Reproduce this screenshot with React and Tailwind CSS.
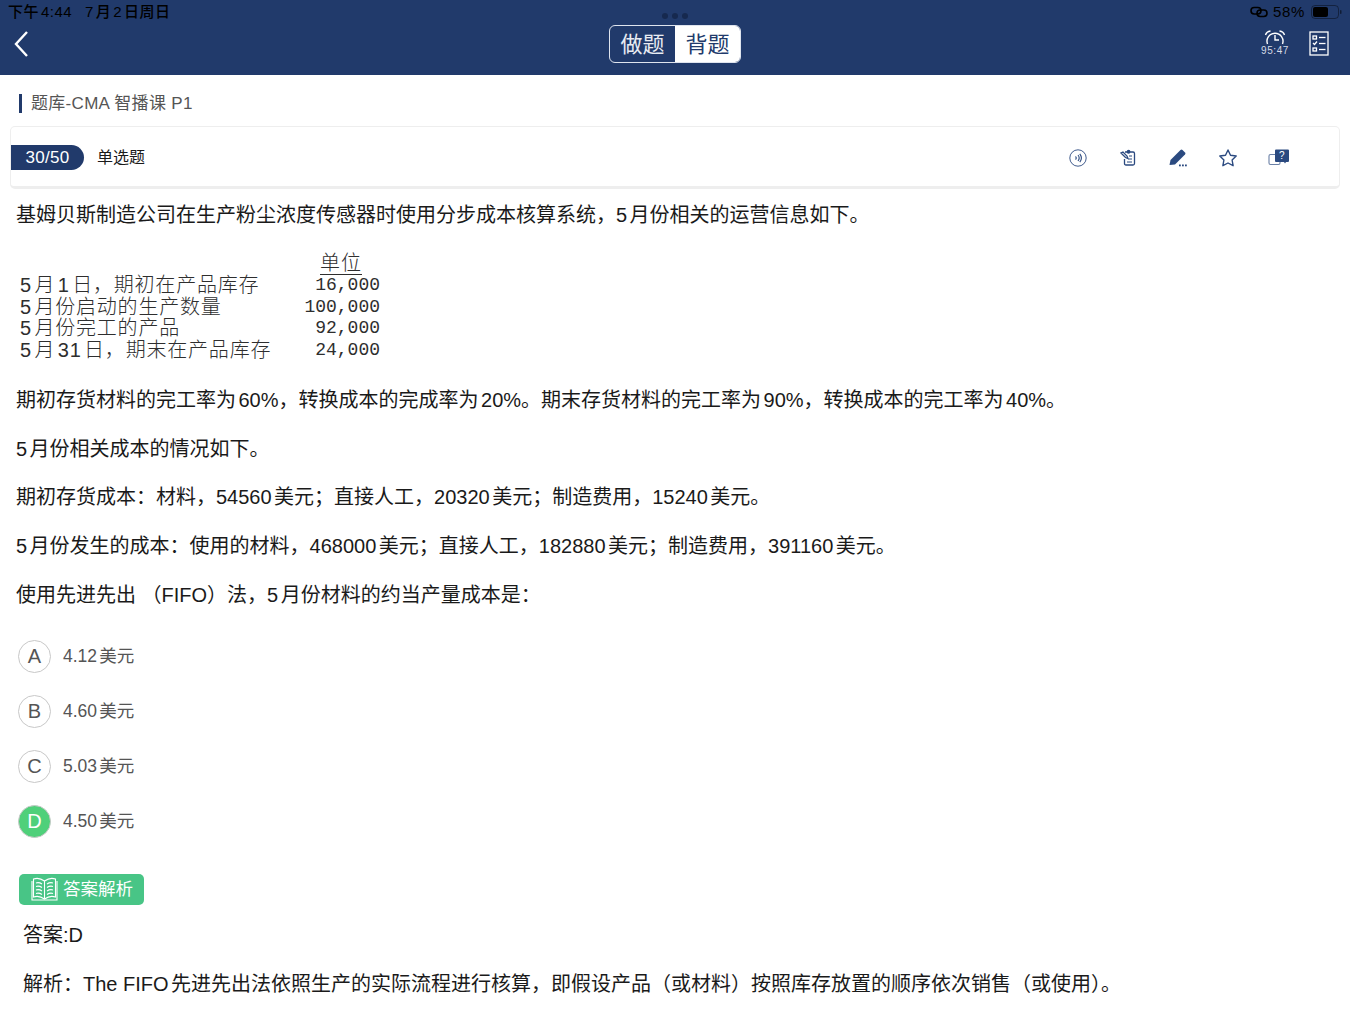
const font = { fontFamily: '"Liberation Sans", "Noto Sans CJK SC", sans-serif' };

const paragraphs = [
  '期初存货材料的完工率为60%，转换成本的完成率为20%。期末存货材料的完工率为90%，转换成本的完工率为40%。',
  '5月份相关成本的情况如下。',
  '期初存货成本：材料，54560美元；直接人工，20320美元；制造费用，15240美元。',
  '5月份发生的成本：使用的材料，468000美元；直接人工，182880美元；制造费用，391160美元。',
  '使用先进先出 （FIFO）法，5月份材料的约当产量成本是：',
];

const options = [
  { key: 'A', text: '4.12美元' },
  { key: 'B', text: '4.60美元' },
  { key: 'C', text: '5.03美元' },
  { key: 'D', text: '4.50美元', correct: true },
];

const tableRows = [
  ['5月1日，期初在产品库存', '16,000'],
  ['5月份启动的生产数量', '100,000'],
  ['5月份完工的产品', '92,000'],
  ['5月31日，期末在产品库存', '24,000'],
];

function StatusBar() {
  return (
    <div className="flex h-[24px] items-center justify-between pl-[8px] pr-[7px] text-[15px] font-medium text-black">
      <div className="flex gap-[13px] tracking-[0.5px]">
        <span>下午4:44</span>
        <span>7月2日周日</span>
      </div>
      <div className="flex items-center gap-[5px]">
        <svg width="18" height="12" viewBox="0 0 18 12" fill="none" stroke="#000" strokeWidth="1.6">
          <rect x="1" y="1.5" width="10" height="6.5" rx="3.2" />
          <rect x="7" y="4" width="10" height="6.5" rx="3.2" />
        </svg>
        <span className="tracking-[0.7px]">58%</span>
        <svg width="32" height="14" viewBox="0 0 32 14" className="ml-[1px]">
          <rect x="0.5" y="0.5" width="27" height="13" rx="3.5" fill="none" stroke="#000" strokeOpacity="0.4" />
          <rect x="2" y="2" width="15" height="10" rx="2" fill="#000" />
          <rect x="29" y="5" width="1.5" height="4" rx="0.7" fill="#000" fillOpacity="0.5" />
        </svg>
      </div>
    </div>
  );
}

function NavBar() {
  return (
    <div className="flex h-[51px] items-start justify-between">
      <div className="w-[200px] pl-[14px] pt-[7px]">
        <svg width="14" height="26" viewBox="0 0 14 26" fill="none" stroke="white" strokeWidth="2.4">
          <path d="M13 1 L2 13 L13 25" />
        </svg>
      </div>
      <div className="mt-[1px] flex h-[38px] w-[132px] overflow-hidden rounded-[6px] border border-[#dfe4ee] text-[22px]">
        <div className="flex flex-1 items-center justify-center text-[#e8ebf2]">做题</div>
        <div className="flex flex-1 items-center justify-center bg-white text-[#213a6b]">背题</div>
      </div>
      <div className="flex w-[200px] justify-end gap-[20px] pr-[21px] pt-[6px]">
        <div className="flex w-[28px] flex-col items-center">
          <svg width="22" height="15" viewBox="0 0 22 15" fill="none" stroke="white" strokeWidth="1.4">
            <path d="M3.5 14 A8 8 0 1 1 18.5 14" />
            <path d="M11 5 V10 H15" />
            <path d="M1.5 5 Q2.5 1.5 6.5 1" />
            <path d="M20.5 5 Q19.5 1.5 15.5 1" />
          </svg>
          <span className="whitespace-nowrap text-[10px] leading-[12px] tracking-[0.6px] text-[#d5dbe6]">95:47</span>
        </div>
        <svg width="20" height="25" viewBox="0 0 20 25" fill="none" stroke="white" strokeWidth="1.3" className="mt-[1px]">
          <rect x="1" y="1" width="18" height="23" />
          <rect x="4" y="5" width="3.5" height="3" />
          <path d="M10 6.5 H16.5" />
          <path d="M4 12 L5.5 13.5 L8 10.5" />
          <path d="M10 12.5 H16.5" />
          <rect x="4" y="17" width="3.5" height="3" />
          <path d="M10 18.5 H16.5" />
        </svg>
      </div>
    </div>
  );
}

function ToolIcons() {
  return (
    <div className="flex items-center gap-[30px] pr-[51px]">
      <svg width="20" height="20" viewBox="0 0 20 20" fill="none" stroke="#2b4a80">
        <circle cx="10" cy="10" r="8.2" strokeWidth="0.9" />
        <path d="M7.5 8.5 Q9 10 7.5 11.5" strokeWidth="1.1" />
        <path d="M10 7 Q12.4 10 10 13" strokeWidth="1.1" />
        <path d="M11.8 5.8 Q15 10 11.8 14.2" strokeWidth="1.1" />
      </svg>
      <svg width="20" height="20" viewBox="0 0 20 20" fill="none" stroke="#2b4a80" strokeWidth="1.3">
        <path d="M7 4 H15 Q16.5 4 16.5 5.5 V15.5 Q16.5 17 15 17 H8 Q6.5 17 6.5 15.5 V11" />
        <path d="M3 5 L7.5 9.5 L10 10.5 L9 8 L5 4 Z" />
        <path d="M11 8 H14 M10.5 11 H14 M9 14 H14" strokeWidth="1" />
        <circle cx="10.5" cy="3.8" r="1.3" fill="#2b4a80" />
      </svg>
      <svg width="20" height="20" viewBox="0 0 20 20" fill="#2b4a80">
        <path d="M1.5 17 L2.5 12 L12.5 2 Q13.5 1 14.5 2 L17 4.5 Q18 5.5 17 6.5 L7 16.5 Z" />
        <rect x="11" y="16.5" width="1.8" height="1.8" />
        <rect x="14" y="16.5" width="1.8" height="1.8" />
        <rect x="17" y="16.5" width="1.8" height="1.8" />
      </svg>
      <svg width="20" height="20" viewBox="0 0 20 20" fill="none" stroke="#2b4a80" strokeWidth="1.4" strokeLinejoin="round">
        <path d="M10 2 L12.5 7.2 L18.2 8 L14.1 12 L15.1 17.7 L10 15 L4.9 17.7 L5.9 12 L1.8 8 L7.5 7.2 Z" />
      </svg>
      <div className="relative h-[20px] w-[20px]">
        <svg width="22" height="20" viewBox="0 0 22 20" fill="none">
          <rect x="1" y="6.5" width="11" height="10" rx="1.5" stroke="#2b4a80" strokeOpacity="0.7" strokeWidth="1.1" />
          <path d="M7 2.5 Q7 1.5 8 1.5 H20 Q21 1.5 21 2.5 V13 Q21 14 20 14 H18 L17 15.5 L16 14 H8 Q7 14 7 13 Z" fill="#2b4a80" />
        </svg>
        <span className="absolute left-[11px] top-[1px] text-[10px] leading-[13px] text-white">?</span>
      </div>
    </div>
  );
}

function QuestionTable() {
  return (
    <div className="mt-[23px] h-[114px] w-[380px] pl-[20px] text-[20px] font-light leading-[21.6px] text-[#2e2e2e]">
      <div className="flex justify-end pr-[18px]">
        <span className="border-b border-[#2e2e2e] leading-[21px] tracking-[1px]">单位</span>
      </div>
      {tableRows.map(([label, value]) => (
        <div key={label} className="flex justify-between">
          <span className="tracking-[0.8px]">{label}</span>
          <span className="text-[18px]" style={{ fontFamily: '"Liberation Mono", monospace' }}>{value}</span>
        </div>
      ))}
    </div>
  );
}

function Option({ item }) {
  return (
    <div className="flex h-[55px] items-center gap-[12px] pl-[18px]">
      <div
        className={
          item.correct
            ? 'flex h-[33px] w-[33px] items-center justify-center rounded-full border border-[#c8c8c8] bg-[#4fd07a] text-[20px] text-white'
            : 'flex h-[33px] w-[33px] items-center justify-center rounded-full border border-[#c8c8c8] bg-white text-[20px] text-[#555]'
        }
      >
        {item.key}
      </div>
      <span className="text-[17.5px] text-[#555]">{item.text}</span>
    </div>
  );
}

export default function App() {
  return (
    <div className="h-[1012px] w-[1350px] overflow-hidden bg-white text-[#1a1a1a] [text-autospace:normal]" style={font}>
      <div className="relative bg-[#213a6b]">
        <StatusBar />
        <NavBar />
        <div className="absolute left-[662px] top-[13px] flex gap-[4px]">
          <span className="h-[6px] w-[6px] rounded-full bg-[#16294f]"></span>
          <span className="h-[6px] w-[6px] rounded-full bg-[#16294f]"></span>
          <span className="h-[6px] w-[6px] rounded-full bg-[#16294f]"></span>
        </div>
      </div>

      <div className="mt-[19px] flex h-[19px] items-center gap-[9px] pl-[19px]">
        <span className="h-[19px] w-[3px] bg-[#213a6b]"></span>
        <span className="text-[17px] tracking-[0.3px] text-[#555]">题库-CMA 智播课 P1</span>
      </div>

      <div className="mx-[10px] mt-[13px] flex h-[63px] items-center justify-between rounded-[5px] border border-b-[3px] border-[#eeeeee] pt-[2px]">
        <div className="flex items-center gap-[13px]">
          <div className="flex h-[25px] w-[73px] items-center justify-center rounded-r-full bg-[#213a6b] text-[17px] tracking-[0.3px] text-white">
            30/50
          </div>
          <span className="text-[16px]">单选题</span>
        </div>
        <ToolIcons />
      </div>

      <div className="pl-[16px] text-[20px]">
        <p className="mt-[11px] leading-[30px]">基姆贝斯制造公司在生产粉尘浓度传感器时使用分步成本核算系统，5月份相关的运营信息如下。</p>
      </div>
      <QuestionTable />
      <div className="mt-[18px] flex flex-col gap-[18.7px] pl-[16px] text-[20px]">
        {paragraphs.map((text) => (
          <p key={text} className="leading-[30px]">{text}</p>
        ))}
      </div>

      <div className="mt-[19px]">
        {options.map((item) => (
          <Option key={item.key} item={item} />
        ))}
      </div>

      <div className="ml-[19px] mt-[25px] flex h-[31px] w-[125px] items-center gap-[5px] rounded-[5px] bg-[#48c586] pl-[12px] text-[17.5px] text-white">
        <svg width="27" height="26" viewBox="0 0 27 26" fill="none" stroke="white" strokeWidth="1.1">
          <path d="M13.5 5 Q8 1 2.5 3 V21 Q8 19 13.5 23 Q19 19 24.5 21 V3 Q19 1 13.5 5 Z" />
          <path d="M13.5 5 V23" />
          <path d="M5 7 Q8 6 11 8 M5 10.5 Q8 9.5 11 11.5 M5 14 Q8 13 11 15 M5 17.5 Q8 16.5 11 18.5" />
          <path d="M22 7 Q19 6 16 8 M22 10.5 Q19 9.5 16 11.5 M22 14 Q19 13 16 15 M22 17.5 Q19 16.5 16 18.5" />
          <path d="M1 5 V24 H26 V5" />
        </svg>
        <span>答案解析</span>
      </div>

      <div className="mt-[15px] flex flex-col gap-[19px] pl-[23px] text-[20px]">
        <p className="leading-[30px]">答案:D</p>
        <p className="leading-[30px]">解析：The FIFO先进先出法依照生产的实际流程进行核算，即假设产品（或材料）按照库存放置的顺序依次销售（或使用）。</p>
      </div>
    </div>
  );
}
